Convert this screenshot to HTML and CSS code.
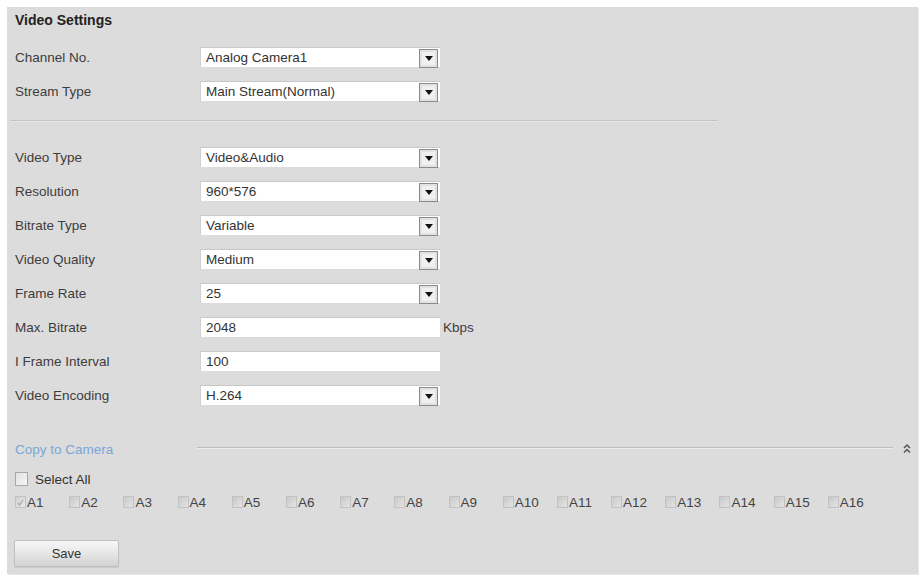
FILE: index.html
```html
<!DOCTYPE html>
<html>
<head>
<meta charset="utf-8">
<link rel="stylesheet" href="styles.css">
</head>
<body>
<div class="panel">
  <div class="title">Video Settings</div>
  <div class="row"><span class="label">Channel No.</span><div class="select"><span class="val">Analog Camera1</span><span class="btn"><i class="tri"></i></span></div></div>
  <div class="row"><span class="label">Stream Type</span><div class="select"><span class="val">Main Stream(Normal)</span><span class="btn"><i class="tri"></i></span></div></div>
  <div class="sep"></div>
  <div class="row"><span class="label">Video Type</span><div class="select"><span class="val">Video&amp;Audio</span><span class="btn"><i class="tri"></i></span></div></div>
  <div class="row"><span class="label">Resolution</span><div class="select"><span class="val">960*576</span><span class="btn"><i class="tri"></i></span></div></div>
  <div class="row"><span class="label">Bitrate Type</span><div class="select"><span class="val">Variable</span><span class="btn"><i class="tri"></i></span></div></div>
  <div class="row"><span class="label">Video Quality</span><div class="select"><span class="val">Medium</span><span class="btn"><i class="tri"></i></span></div></div>
  <div class="row"><span class="label">Frame Rate</span><div class="select"><span class="val">25</span><span class="btn"><i class="tri"></i></span></div></div>
  <div class="row"><span class="label">Max. Bitrate</span><div class="select input"><span class="val">2048</span></div><span class="unit">Kbps</span></div>
  <div class="row"><span class="label">I Frame Interval</span><div class="select input"><span class="val">100</span></div></div>
  <div class="row"><span class="label">Video Encoding</span><div class="select"><span class="val">H.264</span><span class="btn"><i class="tri"></i></span></div></div>

  <div class="copy">
    <span class="copy-label">Copy to Camera</span>
    <span class="copy-line"></span>
    <span class="chev"><svg width="8" height="11" viewBox="0 0 8 11"><polyline points="1,5 4,2 7,5" fill="none" stroke="#555" stroke-width="1.5"/><polyline points="1,9.5 4,6.5 7,9.5" fill="none" stroke="#555" stroke-width="1.5"/></svg></span>
  </div>
  <div class="selall"><span class="cb big"></span><span>Select All</span></div>
  <div class="cams">
    <span class="cam"><span class="cb checked"><svg width="9" height="9" viewBox="0 0 9 9"><polyline points="2,5 3.5,7 7,2" fill="none" stroke="#a8a8a8" stroke-width="1.3"/></svg></span>A1</span>
    <span class="cam"><span class="cb"></span>A2</span>
    <span class="cam"><span class="cb"></span>A3</span>
    <span class="cam"><span class="cb"></span>A4</span>
    <span class="cam"><span class="cb"></span>A5</span>
    <span class="cam"><span class="cb"></span>A6</span>
    <span class="cam"><span class="cb"></span>A7</span>
    <span class="cam"><span class="cb"></span>A8</span>
    <span class="cam"><span class="cb"></span>A9</span>
    <span class="cam"><span class="cb"></span>A10</span>
    <span class="cam"><span class="cb"></span>A11</span>
    <span class="cam"><span class="cb"></span>A12</span>
    <span class="cam"><span class="cb"></span>A13</span>
    <span class="cam"><span class="cb"></span>A14</span>
    <span class="cam"><span class="cb"></span>A15</span>
    <span class="cam"><span class="cb"></span>A16</span>
  </div>
  <button class="save">Save</button>
</div>
</body>
</html>
```

FILE: styles.css
```css
html, body {
  margin: 0;
  padding: 0;
  background: #ffffff;
}
body {
  padding: 7px 5px 10px 7px;
  font-family: "Liberation Sans", Arial, sans-serif;
  font-size: 13.5px;
  color: #3d3d3d;
}
.panel {
  width: 911px;
  height: 567px;
  box-sizing: border-box;
  background: #dcdcdc;
  padding: 0 0 0 8px;
  display: flex;
  flex-direction: column;
  box-shadow: 1px 1px 0 #e8e8e8;
}
.title {
  font-weight: bold;
  font-size: 14px;
  color: #222;
  line-height: 14px;
  padding-top: 6px;
  padding-bottom: 13px;
}
.row {
  height: 34px;
  display: flex;
  align-items: center;
}
.label {
  width: 185px;
  flex: none;
}
.select {
  width: 240px;
  height: 20px;
  box-sizing: border-box;
  background: #fff;
  border-top: 1px solid #c8c8c8;
  border-left: 1px solid #d0d0d0;
  display: flex;
  align-items: center;
  justify-content: space-between;
  padding-left: 5px;
  padding-right: 2px;
}
.val {
  color: #333;
  line-height: 18px;
}
.btn {
  width: 19px;
  height: 19px;
  box-sizing: border-box;
  border: 1px solid #8a8a8a;
  background: #f0f0f0;
  box-shadow: inset 0 0 0 2px #e2e2e2;
  display: flex;
  align-items: center;
  justify-content: center;
  margin-top: 1px;
}
.tri {
  width: 0;
  height: 0;
  border-left: 4px solid transparent;
  border-right: 4px solid transparent;
  border-top: 5px solid #111;
}
.unit {
  margin-left: 3px;
}
.sep {
  margin: 12px 0 18px -5px;
  width: 708px;
  height: 1px;
  background: #c4c4c4;
  border-bottom: 1px solid #e6e6e6;
  flex: none;
}
.copy {
  margin-top: 25px;
  height: 24px;
  display: flex;
  align-items: center;
}
.copy-label {
  width: 182px;
  flex: none;
  color: #7aa6d8;
}
.copy-line {
  width: 696px;
  height: 1px;
  background: #bdbdbd;
  border-bottom: 1px solid #ececec;
  margin-top: -3px;
}
.chev {
  margin-left: 10px;
  display: flex;
  margin-top: -2px;
}
.selall {
  margin-top: 8px;
  height: 20px;
  display: flex;
  align-items: center;
  gap: 7px;
  color: #333;
}
.cb {
  width: 11px;
  height: 12px;
  box-sizing: border-box;
  border: 1px solid #c2c2c2;
  background: linear-gradient(135deg, #c8c8c8, #e4e4e4);
  display: inline-flex;
  align-items: center;
  justify-content: center;
  flex: none;
}
.cb.big {
  width: 13px;
  height: 14px;
  border: 1px solid #a8a8a8;
  background: linear-gradient(135deg, #e2e2e2, #f6f6f6);
}
.cb.checked {
  background: linear-gradient(135deg, #d2d2d2, #e8e8e8);
}
.cams {
  margin-top: 4px;
  height: 18px;
  display: grid;
  grid-template-columns: repeat(16, 54.2px);
  align-items: center;
  color: #444;
}
.cam {
  display: flex;
  align-items: center;
  gap: 1px;
}
.save {
  margin-top: 29px;
  width: 105px;
  height: 27px;
  border: 1px solid #c0c0c0;
  border-radius: 2px;
  background: linear-gradient(#f7f7f7, #e6e6e6 50%, #d2d2d2);
  font-family: "Liberation Sans", Arial, sans-serif;
  font-size: 13px;
  color: #333;
  padding: 0;
  margin-left: -1px;
  box-shadow: 0 1px 1px #c8c8c8;
}
```
